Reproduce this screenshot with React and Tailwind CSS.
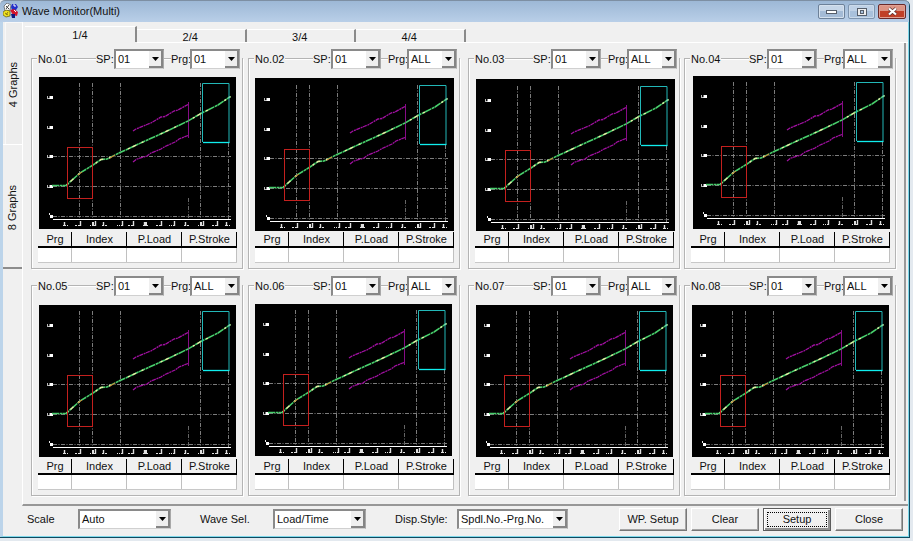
import React from 'react'
import clsx from 'clsx'

// x / y / w / h place the black plot area, dx / dy move the waveform inside it
const GRAPHS = [
  { no: '01', prg: '01', x: 1, y: 1, w: 197, h: 152, dx: 0, dy: 0 },
  { no: '02', prg: 'ALL', x: 0, y: 2, w: 199, h: 153, dx: 1, dy: 1 },
  { no: '03', prg: 'ALL', x: 1, y: 3, w: 199, h: 152, dx: 1, dy: 1 },
  { no: '04', prg: 'ALL', x: 2, y: 0, w: 197, h: 153, dx: 0, dy: 0 },
  { no: '05', prg: 'ALL', x: 1, y: 2, w: 197, h: 152, dx: 0, dy: 0 },
  { no: '06', prg: 'ALL', x: 0, y: 1, w: 197, h: 152, dx: 0, dy: 0 },
  { no: '07', prg: 'ALL', x: 1, y: 2, w: 197, h: 152, dx: 0, dy: 0 },
  { no: '08', prg: 'ALL', x: 1, y: 2, w: 197, h: 152, dx: 0, dy: 0 },
]

const TICKS = [26, 38, 53, 65, 80, 91, 106, 119, 132, 147, 161, 175, 188]
const WAVE = 'M13 108.5H27L41 96L54 88L62 82.5L68 82L81 75.5L91 71L106 64L126 55L149 44L161 37L179 28L191.5 19.5'

const Waveform = ({ graph }) => (
  <svg className="block shrink-0" width="202" height="156" viewBox="0 0 202 156">
    <rect x={graph.x} y={graph.y} width={graph.w} height={graph.h} fill="#000" />
    <g transform={`translate(${graph.x + graph.dx} ${graph.y + graph.dy})`} fill="none">
      {/* grid */}
      <g stroke="#7c7c7c" strokeDasharray="4 1.5 1 1.5">
        <path d="M40.5 6V142M53.5 6V142M81.5 6V142M161.5 6V142M189.5 66V142" />
        <path d="M14 79.5H192M14 109.5H192M14 139.5H192" />
        <path d="M149.5 121V142" stroke="#666" />
      </g>
      <path d="M14 142.5H192" stroke="#fff" />

      {/* y axis marks */}
      <g stroke="#e8e8e8">
        {[20, 50, 79, 109].map((y) => (
          <g key={y}>
            <path d={`M8.5 ${y - 1}V${y + 1}M8 ${y + 1.5}H11`} strokeWidth="0.8" />
            <rect x="10.5" y={y - 1} width="3.5" height="3" fill="#fff" stroke="none" />
          </g>
        ))}
        <path d="M10.5 136V138" />
        <rect x="11" y="138" width="3" height="3" fill="#fff" stroke="none" />
      </g>

      {/* x axis marks */}
      <g stroke="#e0e0e0">
        {TICKS.map((x, i) => (
          <g key={x}>
            <path d={i % 3 === 0 ? `M${x - 0.5} 145V149` : `M${x + 3.5} 144V149`} strokeWidth="1.4" />
            <path d={`M${x - 2} 148.5H${x + 3}`} strokeDasharray={i % 2 ? '2 1' : '1 1'} />
            {i % 4 === 2 && <path d={`M${x + 1} 145V149`} strokeWidth="2" />}
          </g>
        ))}
      </g>

      {/* purple tolerance band */}
      <g stroke="#a010a0" strokeWidth="1.3">
        <path d="M94 54L97 52L108 47.5L112 46L122 40L126 39.5L135 34L139 33L149 27.5" strokeDasharray="4 0.7 2 0.5" />
        <path d="M94 85L98 82L108 79L112 76L122 72L126 69.5L136 65L140 62L149 58.5" strokeDasharray="4 0.7 2 0.5" />
        <path d="M149.5 25V61" stroke="#860c86" strokeWidth="1" />
      </g>

      <path d={WAVE} stroke="#48cf6c" strokeWidth="1.6" strokeDasharray="7 0.6 3 0.4" />
      <path d={WAVE} stroke="#eaeaa4" strokeWidth="1.4" strokeDasharray="0 15 2 3 4 6 2 4" />
      <path d="M39 98L43 95M71 81L76 78" stroke="#e07a30" />

      <rect x="28.5" y="70.5" width="25" height="51" stroke="#c4201e" />
      <path d="M190 6.5H163.5V65" stroke="#22b8b8" />
      <path d="M190 6.5V65.5" stroke="#22b8b8" />
      <path d="M164 65.5H190.5" stroke="#10eeee" strokeWidth="1.3" />
    </g>
  </svg>
)

const Combo = ({ value, className }) => (
  <div
    className={clsx(
      'flex h-5 shrink-0 border border-t-2 border-l-2 border-[#8a8a8a] border-r-[#a8a8a8] border-b-[#d0d0d0] bg-white',
      className
    )}
  >
    <span className="flex-1 whitespace-nowrap pl-[2px] leading-[17px]">{value}</span>
    <span className="flex w-[14px] items-center justify-center border-r-2 border-b-2 border-[#858585] bg-[#efefef]">
      <svg width="7" height="4" viewBox="0 0 7 4">
        <path d="M0 0H7L3.5 4Z" fill="#000" />
      </svg>
    </span>
  </div>
)

const GraphPanel = ({ graph }) => (
  <div className="h-[220px] w-[212px]">
    <div className="relative z-10 flex h-5 items-center pl-[6px]">
      <span className="w-[31px] bg-[#f0f0f0] pl-px">No.{graph.no}</span>
      <span className="ml-[28px] w-[18px] bg-[#f0f0f0]">SP:</span>
      <Combo value="01" className="w-[50px]" />
      <span className="ml-[7px] w-[19px] bg-[#f0f0f0]">Prg:</span>
      <Combo value={graph.prg} className="w-[50px]" />
      <span className="h-3 w-[2px] bg-[#f0f0f0]" />
    </div>

    <div className="-mt-[11px] h-[211px] border border-[#b4b4b4] pt-[17px] pl-[6px] shadow-[1px_1px_0_#fff,inset_1px_1px_0_#fff]">
      <Waveform graph={graph} />
      <div className="grid h-4 w-[199px] grid-cols-[34px_55px_55px_55px] border-b-2 border-black text-center leading-[15px]">
        {['Prg', 'Index', 'P.Load', 'P.Stroke'].map((col) => (
          <span key={col} className="h-[14px] border-r border-black pl-px">{col}</span>
        ))}
      </div>
      <div className="grid h-[15px] w-[199px] grid-cols-[34px_55px_55px_55px] border-b border-[#c8c8c8] bg-white">
        {[0, 1, 2, 3].map((i) => (
          <span key={i} className="border-r border-[#c0c0c0]" />
        ))}
      </div>
    </div>
  </div>
)

const Button = ({ children, focused }) => (
  <button
    className={clsx(
      'flex h-[23px] w-[68px] border bg-[#f0f0f0]',
      focused
        ? 'border-[#5c5c5c] p-[3px] shadow-[inset_1px_1px_0_#fff,inset_-2px_-2px_0_#909090]'
        : 'border-t-white border-l-white border-r-[#777] border-b-[#777] shadow-[inset_-1px_-1px_0_#a5a5a5]'
    )}
  >
    <span className={clsx('flex h-full w-full items-center justify-center', focused && 'border border-dotted border-black')}>
      {children}
    </span>
  </button>
)

const TitleBar = () => (
  <div className="flex h-[22px] shrink-0 rounded-t-[5px] border-t border-[#7d8fa3] bg-linear-to-b from-[#9db8d6] to-[#b9cfe8] pl-[3px]">
    <svg className="mt-[2px]" width="16" height="16" viewBox="0 0 16 16">
      <path d="M1 3L4 0L8 2L7 7L2 8Z" fill="#fff" stroke="#555" strokeWidth="0.7" />
      <path d="M3 3L6 6M6 2L3 6" stroke="#444" />
      <path d="M9 1H13L15 4L13 7H9L8 4Z" fill="#2330c8" />
      <path d="M10 2L12 2L12 4" stroke="#fff" fill="none" />
      <path d="M0 9L3 7L7 8L7 13L3 14L0 12Z" fill="#f2e421" stroke="#5c5410" strokeWidth="0.7" />
      <path d="M2 10L5 12M5 9L3 12" stroke="#8a7a10" />
      <path d="M7 7L11 6L15 9L14 13L10 12Z" fill="#d4142c" />
      <path d="M8 11H12V15H9Z" fill="#101a80" />
      <path d="M11 7L13 9" stroke="#fff" />
    </svg>
    <span className="ml-[3px] leading-[20px]">Wave Monitor(Multi)</span>
    <div className="mt-[3px] mr-[3px] ml-auto flex gap-[3px]">
      <span className="flex h-[15px] w-[27px] items-center justify-center rounded-[2px] border border-[#6d8199] bg-linear-to-b from-[#c6d6e8] from-45% to-[#a4bbd6] to-50% shadow-[inset_0_0_0_1px_#d5e1ee]">
        <svg width="11" height="5" viewBox="0 0 11 5">
          <rect x="0.5" y="1.5" width="10" height="3" fill="#fff" stroke="#555e6b" />
        </svg>
      </span>
      <span className="flex h-[15px] w-[27px] items-center justify-center rounded-[2px] border border-[#7f95af] bg-linear-to-b from-[#bfd1e6] from-45% to-[#a9c1dc] to-50% shadow-[inset_0_0_0_1px_#cbdaea]">
        <svg width="10" height="8" viewBox="0 0 10 8">
          <rect x="0.5" y="0.5" width="9" height="7" fill="#eee" stroke="#555e6b" />
          <rect x="3.5" y="2.5" width="3" height="3" fill="#a9c1dc" stroke="#555e6b" />
        </svg>
      </span>
      <span className="flex h-[15px] w-[28px] items-center justify-center rounded-[2px] border border-[#6a2a2a] bg-linear-to-b from-[#dc9484] from-45% to-[#c04028] to-50% shadow-[inset_0_0_0_1px_#e0a093]">
        <svg width="11" height="9" viewBox="0 0 11 9">
          <path d="M2 1.5L9 7.5M9 1.5L2 7.5" stroke="#5a3030" strokeWidth="3.6" />
          <path d="M2 1.5L9 7.5M9 1.5L2 7.5" stroke="#fff" strokeWidth="2.2" />
        </svg>
      </span>
    </div>
  </div>
)

const SideTabs = () => (
  <div className="flex w-[19px] shrink-0 flex-col">
    <div className="ml-[2px] flex h-[122px] items-center justify-center border-t border-l border-[#f8f8f8] bg-[#ededed] pt-[3px] pr-[2px]">
      <span className="rotate-180 whitespace-nowrap [writing-mode:vertical-rl]">4 Graphs</span>
    </div>
    <div className="flex h-[125px] items-center justify-center border-t border-b-2 border-t-white border-b-[#8c8c8c] pt-[3px]">
      <span className="rotate-180 whitespace-nowrap [writing-mode:vertical-rl]">8 Graphs</span>
    </div>
  </div>
)

const PageTabs = () => (
  <div className="flex h-[21px] items-end pl-[2px] text-center">
    <span className="mb-px h-[16px] w-[112px] border-t border-r-2 border-t-white border-r-[#8a8a8a] leading-[16px]">1/4</span>
    <div className="flex flex-1 border-b border-white">
      {['2/4', '3/4', '4/4'].map((tab) => (
        <span key={tab} className="h-[13px] w-[109.5px] border-t border-r-2 border-t-white border-r-[#8a8a8a] pr-px leading-[14px]">
          {tab}
        </span>
      ))}
    </div>
  </div>
)

export default function App() {
  return (
    <div className="h-[541px] w-[913px] overflow-hidden bg-[#e3e9ef] font-['Liberation_Sans',Arial,sans-serif] text-[11px] text-[#111]">
      <div className="flex h-[538px] w-[910px] flex-col rounded-t-[6px] border-r border-b border-[#0f4a60] bg-[#f0f0f0]">
        <TitleBar />
        <div className="flex min-h-0 flex-1 flex-col border-r border-b border-l-3 border-r-[#7fd8ea] border-b-[#7fd8ea] border-l-[#bcd4ea]">
          <div className="flex h-[484px] shrink-0">
            <SideTabs />
            <div className="flex flex-1 flex-col border-b-2 border-l border-b-[#979797] border-l-white">
              <PageTabs />
              <div className="mr-[2px] mb-[3px] flex-1 border-r-2 border-[#9a9a9a] pl-[8px]">
                <div className="mt-[6px] grid grid-cols-[217px_220px_216px_212px] gap-y-[7px]">
                  {GRAPHS.map((graph) => (
                    <GraphPanel key={graph.no} graph={graph} />
                  ))}
                </div>
              </div>
            </div>
          </div>

          <div className="flex items-start pt-[2px]">
            <span className="ml-[24px] w-[51px] pt-px leading-[20px]">Scale</span>
            <Combo value="Auto" className="mt-px w-[93px]" />
            <span className="ml-[29px] w-[73px] pt-px leading-[20px]">Wave Sel.</span>
            <Combo value="Load/Time" className="mt-px w-[93px]" />
            <span className="ml-[29px] w-[62px] pt-px leading-[20px]">Disp.Style:</span>
            <Combo value="Spdl.No.-Prg.No." className="mt-px w-[111px]" />
            <div className="ml-[51px] flex gap-[4px]">
              <Button>WP. Setup</Button>
              <Button>Clear</Button>
              <Button focused>Setup</Button>
              <Button>Close</Button>
            </div>
          </div>
        </div>
      </div>
    </div>
  )
}
